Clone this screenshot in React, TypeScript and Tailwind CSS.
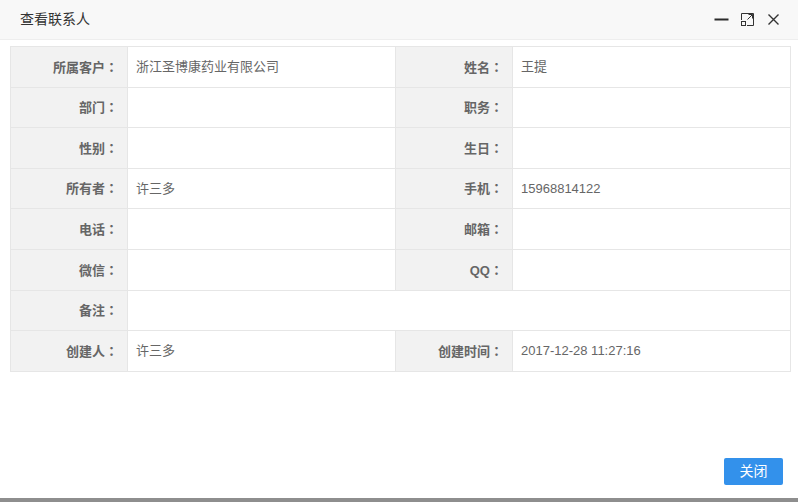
import React from "react";

type Row = [string, string, string?, string?];

const rows: Row[] = [
    ["所属客户", "浙江圣博康药业有限公司", "姓名", "王提"],
    ["部门", "", "职务", ""],
    ["性别", "", "生日", ""],
    ["所有者", "许三多", "手机", "15968814122"],
    ["电话", "", "邮箱", ""],
    ["微信", "", "QQ", ""],
    ["备注", ""],
    ["创建人", "许三多", "创建时间", "2017-12-28 11:27:16"],
];

function Label({ text }: { text: string }) {
    return (
        <td className="border border-[#e6e6e6] bg-[#f2f2f2] pr-[9px] text-right align-middle font-bold text-[#666]">
            {text}
            <span style={{ fontFamily: '"Noto Sans CJK JP", sans-serif' }}>：</span>
        </td>
    );
}

function Value({ text, span }: { text: string; span?: number }) {
    return (
        <td colSpan={span} className="border border-[#e6e6e6] bg-white pl-[8px] align-middle text-[#666]">
            {text}
        </td>
    );
}

export default function App() {
    return (
        <div
            className="flex h-[502px] w-[798px] flex-col bg-white text-[13px]"
            style={{ fontFamily: '"Liberation Sans", Arial, "Noto Sans CJK SC", sans-serif' }}
        >
            <div className="flex h-10 shrink-0 items-center justify-between border-b border-[#eee] bg-[#f8f8f8] pl-5 pr-[17px]">
                <span className="text-[14px] text-[#333]">查看联系人</span>
                <div className="flex items-center gap-[11px] text-[#333]">
                    <svg width="15" height="15" viewBox="0 0 15 15">
                        <path d="M0.5 7.5h14" stroke="#2b2b2b" strokeWidth="2" />
                    </svg>
                    <svg width="15" height="15" viewBox="0 0 15 15" fill="none" stroke="#333" strokeWidth="1">
                        <path d="M1.5 8V1.5h12v12H7" />
                        <rect x="1.5" y="9.5" width="4" height="4" />
                        <path d="M7.5 7.5l5-5M8.5 2.5h4v4" />
                    </svg>
                    <svg width="15" height="15" viewBox="0 0 15 15" fill="none" stroke="#333" strokeWidth="1.4">
                        <path d="M2.5 2.5l10 10M12.5 2.5l-10 10" />
                    </svg>
                </div>
            </div>

            <div className="flex-1 px-[10px] pt-[6px]">
                <table className="w-[780px] table-fixed border-collapse">
                    <colgroup>
                        <col className="w-[117px]" />
                        <col className="w-[268px]" />
                        <col className="w-[117px]" />
                        <col className="w-[278px]" />
                    </colgroup>
                    <tbody>
                        {rows.map((r, i) => (
                            <tr key={i} className="h-[40.6px]">
                                <Label text={r[0]} />
                                {r[2] === undefined ? (
                                    <Value text={r[1]} span={3} />
                                ) : (
                                    <>
                                        <Value text={r[1]} />
                                        <Label text={r[2]} />
                                        <Value text={r[3] ?? ""} />
                                    </>
                                )}
                            </tr>
                        ))}
                    </tbody>
                </table>
            </div>

            <div className="flex justify-end px-[15px] pb-[13px]">
                <button className="h-[27px] w-[59px] rounded-[2px] bg-[#3391eb] text-[14px] text-white">关闭</button>
            </div>
            <div className="h-1 shrink-0 bg-[#8e8e8e]" />
        </div>
    );
}
